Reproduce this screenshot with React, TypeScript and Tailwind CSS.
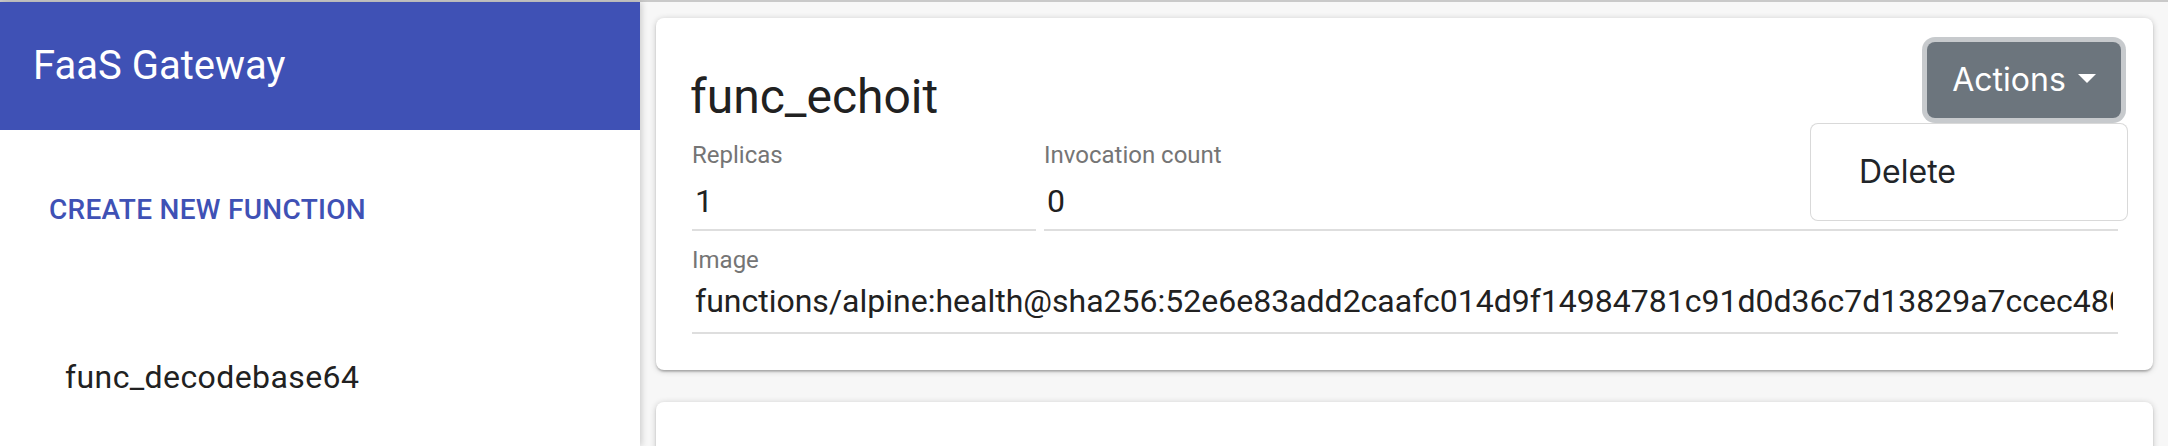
import React from "react";

const cardShadow =
  "shadow-[0_2px_2px_0_rgba(0,0,0,0.14),0_3px_2px_-2px_rgba(0,0,0,0.12),0_1px_6px_0_rgba(0,0,0,0.2)]";

function Field({
  label,
  value,
}: {
  label: string;
  value: string;
}) {
  return (
    <div className="min-w-0">
      <div className="text-[24px] leading-[32px] text-[#757575]">{label}</div>
      <div className="mt-[10px] pb-[8px] pl-[3px] border-b-2 border-[#dedede] text-[32px] leading-[40px] text-[#212121]">
        {value}
      </div>
    </div>
  );
}

function ActionsMenu() {
  return (
    <div className="relative mr-[-3px] font-['Inter',sans-serif]">
      <button className="flex h-[76px] w-[194px] items-center justify-center rounded-[8px] bg-[#6c757d] text-[32px] leading-[48px] text-white shadow-[0_0_0_5px_rgba(130,138,145,0.45)]">
        <span>Actions</span>
        <span className="ml-[12px] mt-[-4px] h-0 w-0 border-x-[9px] border-t-[9px] border-x-transparent border-t-white" />
      </button>
      <div className="absolute right-[-7px] top-full z-20 mt-[5px] w-[318px] rounded-[8px] border border-[rgba(0,0,0,0.15)] bg-white py-[16px]">
        <div className="px-[48px] py-[8px] text-[32px] leading-[48px] text-[#212529]">
          Delete
        </div>
      </div>
    </div>
  );
}

function FunctionCard() {
  return (
    <section
      className={`relative h-[352px] shrink-0 rounded-[8px] bg-white pl-[36px] pr-[35px] pt-[24px] ${cardShadow}`}
    >
      <div className="flex items-start justify-between">
        <h2 className="mt-[27px] ml-[-2px] text-[48px] font-normal leading-[56px] text-[#212121]">
          func_echoit
        </h2>
        <ActionsMenu />
      </div>

      <div className="mt-[14px] grid grid-cols-[344px_1fr] gap-x-[8px]">
        <Field label="Replicas" value="1" />
        <Field label="Invocation count" value="0" />
      </div>

      <div className="mt-[13px]">
        <div className="text-[24px] leading-[32px] text-[#757575]">Image</div>
        <div className="mt-[5px] border-b-2 border-[#dedede] pb-[11px]">
          <div className="mr-[5px] overflow-hidden whitespace-nowrap pl-[3px] text-[32px] leading-[40px] text-[#212121]">
            functions/alpine:health@sha256:52e6e83add2caafc014d9f14984781c91d0d36c7d13829a7ccec480c5b9e2f1a
          </div>
        </div>
      </div>
    </section>
  );
}

export default function App() {
  return (
    <div className="flex h-[446px] w-full flex-col overflow-hidden bg-[#f7f7f7] font-['Roboto',sans-serif]">
      <div className="h-[2px] shrink-0 bg-[#c9c9c9]" />
      <div className="flex min-h-0 flex-1">
        <aside className="relative z-10 w-[640px] shrink-0 bg-white shadow-[2px_0_6px_rgba(0,0,0,0.16)]">
          <div className="flex h-[128px] items-center bg-[#3f51b5] pl-[33px]">
            <h1 className="text-[40px] font-normal leading-none text-white">
              FaaS Gateway
            </h1>
          </div>
          <div className="mt-[56px] flex h-[48px] items-center pl-[49px]">
            <button className="text-[28px] font-medium uppercase leading-[48px] tracking-[0.3px] text-[#3f51b5]">
              Create new function
            </button>
          </div>
          <div className="mt-[119px] flex h-[48px] items-center pl-[65px] text-[32px] tracking-[0.4px] text-[#212121]">
            func_decodebase64
          </div>
        </aside>
        <main className="flex min-w-0 flex-1 flex-col gap-[32px] pb-[16px] pl-[16px] pr-[15px] pt-[16px]">
          <FunctionCard />
          <section
            className={`h-[200px] shrink-0 rounded-[8px] bg-white ${cardShadow}`}
          />
        </main>
      </div>
    </div>
  );
}
